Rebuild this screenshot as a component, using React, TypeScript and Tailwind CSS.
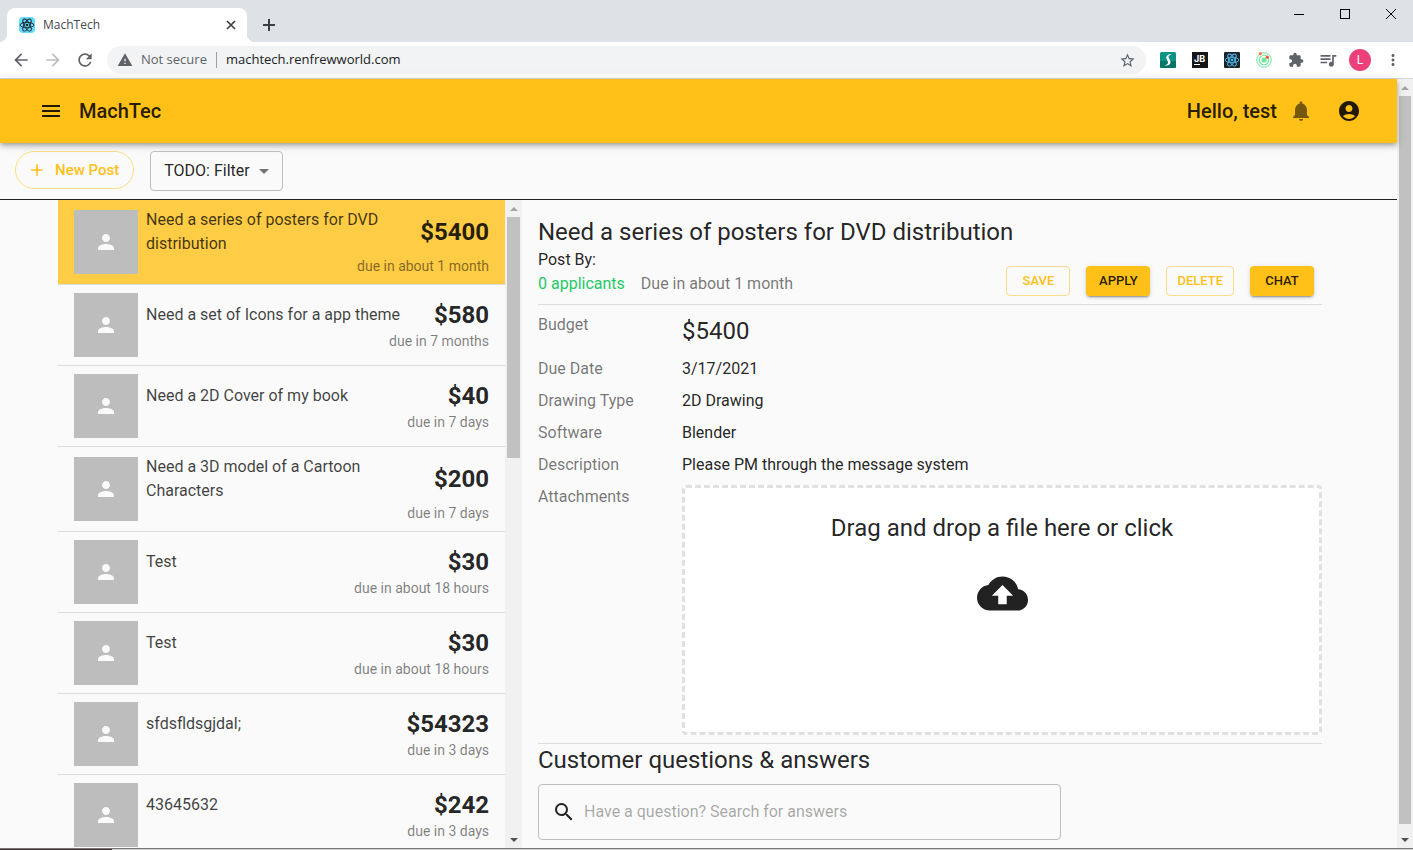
import React from 'react';
import {
  MdAccountCircle,
  MdAdd,
  MdArrowBack,
  MdArrowDropDown,
  MdArrowForward,
  MdClose,
  MdCloudUpload,
  MdExtension,
  MdMenu,
  MdMoreVert,
  MdNotifications,
  MdPerson,
  MdQueueMusic,
  MdRefresh,
  MdSearch,
  MdStarBorder,
  MdWarning,
} from 'react-icons/md';

interface Post {
  title: string;
  price: string;
  due: string;
}

const posts: Post[] = [
  { title: 'Need a series of posters for DVD distribution', price: '$5400', due: 'due in about 1 month' },
  { title: 'Need a set of Icons for a app theme', price: '$580', due: 'due in 7 months' },
  { title: 'Need a 2D Cover of my book', price: '$40', due: 'due in 7 days' },
  { title: 'Need a 3D model of a Cartoon Characters', price: '$200', due: 'due in 7 days' },
  { title: 'Test', price: '$30', due: 'due in about 18 hours' },
  { title: 'Test', price: '$30', due: 'due in about 18 hours' },
  { title: 'sfdsfldsgjdal;', price: '$54323', due: 'due in 3 days' },
  { title: '43645632', price: '$242', due: 'due in 3 days' },
];

const details = [
  { label: 'Due Date', value: '3/17/2021' },
  { label: 'Drawing Type', value: '2D Drawing' },
  { label: 'Software', value: 'Blender' },
  { label: 'Description', value: 'Please PM through the message system' },
];

function ReactLogo({ color }: { color: string }) {
  return (
    <svg viewBox="0 0 16 16" className="size-4" fill="none" stroke={color} strokeWidth="0.9">
      <ellipse cx="8" cy="8" rx="6.8" ry="2.7" />
      <ellipse cx="8" cy="8" rx="6.8" ry="2.7" transform="rotate(60 8 8)" />
      <ellipse cx="8" cy="8" rx="6.8" ry="2.7" transform="rotate(120 8 8)" />
      <circle cx="8" cy="8" r="1.3" fill={color} stroke="none" />
    </svg>
  );
}

function TargetLogo() {
  return (
    <svg viewBox="0 0 16 16" className="size-4" fill="none" stroke="#6ee7a0">
      <circle cx="8" cy="8" r="7.3" strokeWidth="1" />
      <circle cx="8" cy="8" r="4.7" strokeWidth="1.1" />
      <circle cx="8" cy="8" r="2.6" fill="#6ee7a0" stroke="none" />
      <circle cx="4.3" cy="1.7" r="1.6" fill="#ff7a3c" stroke="none" />
      <circle cx="11.3" cy="5.2" r="1.6" fill="#f4552c" stroke="none" />
    </svg>
  );
}

function ScriptLogo() {
  return (
    <svg viewBox="0 0 16 16" className="size-4">
      <rect width="16" height="16" rx="1.5" fill="#0c9384" />
      <path d="M0 9h16v5.500a1.500 1.500 0 0 1-1.500 1.500h-13A1.500 1.500 0 0 1 0 14.500z" fill="#077468" />
      <path
        d="M11.500 2.400c-3.400-.3-5.500 1.500-5.100 3.900.3 1.900 2.100 3 1.500 5-.3 1-1.500 1.700-3.500 1.900 3.500.9 6.100-.4 6.100-3.200 0-2.300-2-3.300-2-4.900 0-1.300 1.100-2.300 3-2.700z"
        fill="#fff"
      />
    </svg>
  );
}

function Triangle({ up, color }: { up?: boolean; color: string }) {
  return (
    <svg viewBox="0 0 8 4" className="h-1 w-2" fill={color} aria-hidden="true">
      <path d={up ? 'M4 0l4 4H0z' : 'M0 0h8L4 4z'} />
    </svg>
  );
}

function ScrollTrack({ thumb }: { thumb: string }) {
  return (
    <div className="flex w-full flex-col items-center bg-[#f1f1f1]" aria-hidden="true">
      <div className="flex h-[17px] w-full shrink-0 items-center justify-center">
        <Triangle up color="#a3a3a3" />
      </div>
      <div className="min-h-0 w-full flex-1 px-0.5">
        <div className={`w-full bg-[#c1c1c1] ${thumb}`} />
      </div>
      <div className="flex h-[17px] w-full shrink-0 items-center justify-center">
        <Triangle color="#505050" />
      </div>
    </div>
  );
}

function BrowserChrome() {
  return (
    <div className="shrink-0 font-['Open_Sans','Noto_Sans',sans-serif]">
      <div className="flex h-[42px] items-end bg-[#dee1e6] pl-[7px]">
        <div className="relative flex h-[34px] w-60 items-center rounded-t-lg bg-white pr-2 pl-3 before:absolute before:bottom-0 before:-left-2 before:size-2 before:rounded-br-lg before:shadow-[3px_3px_0_0_#fff] after:absolute after:-right-2 after:bottom-0 after:size-2 after:rounded-bl-lg after:shadow-[-3px_3px_0_0_#fff]">
          <span className="rounded-sm bg-[#61dafb]">
            <ReactLogo color="#20232a" />
          </span>
          <span className="ml-2 flex-1 text-[12px] text-[#45494d]">MachTech</span>
          <button aria-label="Close tab" className="text-[#3c4043]">
            <svg viewBox="0 0 16 16" className="size-4" fill="none" stroke="currentColor" strokeWidth="1.7">
              <path d="M4 4l8 8M12 4l-8 8" />
            </svg>
          </button>
        </div>
        <button aria-label="New tab" className="flex h-[34px] items-center pl-3 text-[#3c4043]">
          <svg viewBox="0 0 20 20" className="size-5" fill="none" stroke="currentColor" strokeWidth="2">
            <path d="M10 4v12M4 10h12" />
          </svg>
        </button>
        <div className="ml-auto flex h-[42px] items-start gap-[34px] pt-2 pr-4 text-black">
          <button aria-label="Minimize">
            <svg viewBox="0 0 12 12" className="size-3" stroke="currentColor" fill="none" shapeRendering="crispEdges">
              <path d="M1 6.500h10" />
            </svg>
          </button>
          <button aria-label="Maximize">
            <svg viewBox="0 0 12 12" className="size-3" stroke="currentColor" fill="none" shapeRendering="crispEdges">
              <path d="M1.500 1.500h9v9h-9z" />
            </svg>
          </button>
          <button aria-label="Close window">
            <svg viewBox="0 0 12 12" className="size-3" stroke="currentColor" fill="none">
              <path d="M1 1l10 10M11 1L1 11" />
            </svg>
          </button>
        </div>
      </div>
      <div className="flex h-[37px] items-center border-b border-[#d5d7da] bg-white pr-3 pl-[11px] text-[#5f6368]">
        <div className="flex items-center gap-3">
          <button aria-label="Back">
            <MdArrowBack size={20} />
          </button>
          <button aria-label="Forward" className="text-[#bcbec1]">
            <MdArrowForward size={20} />
          </button>
          <button aria-label="Reload">
            <MdRefresh size={20} />
          </button>
        </div>
        <div className="mr-3.5 ml-3 flex h-7 flex-1 items-center rounded-full bg-[#f1f3f4] px-2.5">
          <MdWarning size={16} />
          <span className="ml-2 text-[13px]">Not secure</span>
          <span className="mx-[9px] h-4 w-px bg-[#9aa0a6]" />
          <input
            aria-label="Address"
            defaultValue="machtech.renfrewworld.com"
            className="min-w-0 flex-1 bg-transparent text-[13px] text-[#202124] outline-none"
          />
          <button aria-label="Bookmark this page">
            <MdStarBorder size={17} />
          </button>
        </div>
        <div className="flex items-center gap-4">
          <ScriptLogo />
          <span className="flex size-4 flex-col bg-[#17171a] px-0.5 pt-0.5 font-['Inter',sans-serif] text-[9px] leading-[9px] font-bold text-white">
            JB
            <span className="mt-px h-px w-1.5 bg-white" />
          </span>
          <span className="rounded-[1px] bg-[#20232a]">
            <ReactLogo color="#4fc3f7" />
          </span>
          <TargetLogo />
          <MdExtension size={16} />
          <MdQueueMusic size={20} className="-mx-0.5" />
          <span className="-mx-[3px] flex size-[22px] items-center justify-center rounded-full bg-[#ec407a] font-[Roboto,sans-serif] text-[12px] text-white">
            L
          </span>
          <button aria-label="Browser menu" className="-mr-px">
            <MdMoreVert size={18} />
          </button>
        </div>
      </div>
    </div>
  );
}

function AppBar() {
  return (
    <header className="relative flex h-16 shrink-0 items-center bg-[#ffc017] pr-9 pl-[39px] text-black/87 shadow-[0_2px_4px_-1px_rgba(0,0,0,0.2),0_4px_5px_0_rgba(0,0,0,0.14),0_1px_10px_0_rgba(0,0,0,0.12)]">
      <button aria-label="Menu">
        <MdMenu size={24} />
      </button>
      <h1 className="ml-4 text-[20px] font-medium">MachTec</h1>
      <span className="mr-3 ml-auto text-[20px] font-medium">Hello, test</span>
      <button aria-label="Notifications" className="mr-6 text-black/54">
        <MdNotifications size={24} />
      </button>
      <button aria-label="Account">
        <MdAccountCircle size={24} />
      </button>
    </header>
  );
}

function FilterBar() {
  return (
    <div className="flex h-[57px] shrink-0 items-start gap-4 border-b border-[#212121] px-[15px] pt-2">
      <button className="flex h-[38px] items-center gap-2 rounded-full border border-[#ffc017]/50 pr-3.5 pl-[11px] text-[15px] font-medium text-[#ffc017]">
        <MdAdd size={20} />
        New Post
      </button>
      <div className="relative flex h-10 items-center rounded-sm border border-[#bdbdbd]">
        <select
          aria-label="Filter"
          className="h-full w-[131px] appearance-none bg-transparent pl-[13px] text-[16px] text-black/87 outline-none"
        >
          <option>TODO: Filter</option>
        </select>
        <MdArrowDropDown size={24} className="pointer-events-none absolute right-1.5 text-black/54" />
      </div>
    </div>
  );
}

function PostRow({ post, selected }: { post: Post; selected: boolean }) {
  return (
    <li
      className={`flex shrink-0 items-center gap-2 border-b border-[#dcdcdc] px-4 py-2 ${selected ? 'bg-[#ffcc45]' : ''}`}
    >
      <div className="flex size-16 shrink-0 items-center justify-center bg-[#bdbdbd] text-[#fafafa]">
        <MdPerson size={24} />
      </div>
      <div className="min-w-0 flex-1">
        <div className="flex items-center justify-between gap-4">
          <span className="text-[16px] leading-6 text-black/75">{post.title}</span>
          <span className="text-[24px] leading-8 font-bold text-black/87">{post.price}</span>
        </div>
        <p className="text-right text-[14px] leading-5 text-black/50">{post.due}</p>
      </div>
    </li>
  );
}

const outlined = 'border border-[#ffc017]/50 text-[#ffc017]';
const contained =
  'bg-[#ffc017] text-black/87 shadow-[0_3px_1px_-2px_rgba(0,0,0,0.2),0_2px_2px_0_rgba(0,0,0,0.14),0_1px_5px_0_rgba(0,0,0,0.12)]';

function ActionButton({ label, variant }: { label: string; variant: string }) {
  return (
    <button className={`h-[30px] min-w-16 rounded-sm px-2.5 text-[13px] font-medium ${variant}`}>{label}</button>
  );
}

function PostDetail() {
  return (
    <section className="min-w-0 flex-1 overflow-hidden pt-4 pr-[17px] pl-4 text-[16px] leading-6 text-black/87">
      <h2 className="text-[24px] leading-8">Need a series of posters for DVD distribution</h2>
      <div className="flex items-end justify-between pr-2">
        <div>
          <p>Post By:</p>
          <p className="flex gap-4">
            <span className="text-[#1ec967]">0 applicants</span>
            <span className="text-black/54">Due in about 1 month</span>
          </p>
        </div>
        <div className="flex gap-4">
          <ActionButton label="SAVE" variant={outlined} />
          <ActionButton label="APPLY" variant={contained} />
          <ActionButton label="DELETE" variant={outlined} />
          <ActionButton label="CHAT" variant={contained} />
        </div>
      </div>
      <hr className="mt-2 mb-1 border-[#dcdcdc]" />
      <dl>
        <div className="flex py-1">
          <dt className="w-36 shrink-0 text-black/54">Budget</dt>
          <dd className="text-[24px] leading-9">$5400</dd>
        </div>
        {details.map((item) => (
          <div key={item.label} className="flex py-1">
            <dt className="w-36 shrink-0 text-black/54">{item.label}</dt>
            <dd>{item.value}</dd>
          </div>
        ))}
        <div className="flex pt-1 pb-2">
          <dt className="w-36 shrink-0 text-black/54">Attachments</dt>
          <dd className="flex-1">
            <button className="flex min-h-[250px] w-full flex-col items-center rounded-sm border-[3px] border-dashed border-[#e0e0e0] bg-white pt-6">
              <span className="text-[24px] leading-8">Drag and drop a file here or click</span>
              <MdCloudUpload size={51} className="mt-6" />
            </button>
          </dd>
        </div>
      </dl>
      <hr className="border-[#dcdcdc]" />
      <h2 className="text-[24px] leading-8">Customer questions &amp; answers</h2>
      <div className="mt-2 flex h-14 w-2/3 items-center gap-2 rounded-sm border border-[#bdbdbd] px-[13px]">
        <MdSearch size={24} />
        <input
          type="text"
          aria-label="Search answers"
          placeholder="Have a question? Search for answers"
          className="min-w-0 flex-1 bg-transparent outline-none placeholder:text-black/35"
        />
      </div>
    </section>
  );
}

export default function App() {
  return (
    <div className="flex h-screen flex-col overflow-hidden bg-[#fafafa]">
      <BrowserChrome />
      <div className="flex min-h-0 flex-1 font-[Roboto,sans-serif]">
        <div className="flex min-w-0 flex-1 flex-col">
          <AppBar />
          <FilterBar />
          <main className="mx-auto flex min-h-0 w-full max-w-[1281px] flex-1">
            <div className="flex w-[464px] shrink-0">
              <ul className="flex min-w-0 flex-1 flex-col overflow-hidden">
                {posts.map((post, i) => (
                  <PostRow key={i} post={post} selected={i === 0} />
                ))}
              </ul>
              <div className="flex w-[17px] shrink-0">
                <ScrollTrack thumb="h-[241px]" />
              </div>
            </div>
            <PostDetail />
          </main>
        </div>
        <div className="flex w-4 shrink-0">
          <ScrollTrack thumb="h-[99%]" />
        </div>
      </div>
      <div className="flex h-0.5 shrink-0 border-t border-[#767676] bg-[#cfcfcf]">
        <div className="h-px w-28 bg-[#4a2c35]" />
      </div>
    </div>
  );
}
